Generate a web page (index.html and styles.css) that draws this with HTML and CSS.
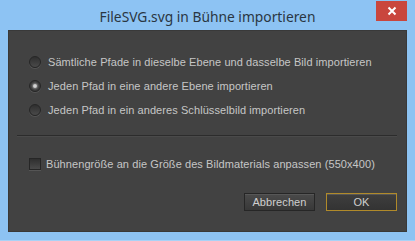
FILE: index.html
```html
<!DOCTYPE html>
<html lang="de">
  <head>
    <meta charset="UTF-8" />
    <meta name="viewport" content="width=device-width, initial-scale=1.0" />
    <title>FileSVG.svg in Bühne importieren</title>
    <link rel="stylesheet" href="styles.css">
  </head>
  <body>
    <div class="window">
      <header class="titlebar">
        <span></span>
        <h1 class="window-title">FileSVG.svg in Bühne importieren</h1>
        <button class="close-button" aria-label="Schließen">
          <svg width="10" height="10" viewBox="0 0 10 10">
            <path d="M1.5 1.5 L8.5 8.5 M8.5 1.5 L1.5 8.5" stroke="#fff" stroke-width="2" />
          </svg>
        </button>
      </header>

      <main class="dialog">
        <div class="options">
          <label class="option">
            <input type="radio" name="mode" class="radio" />
            <span>Sämtliche Pfade in dieselbe Ebene und dasselbe Bild importieren</span>
          </label>
          <label class="option">
            <input type="radio" name="mode" class="radio" checked />
            <span>Jeden Pfad in eine andere Ebene importieren</span>
          </label>
          <label class="option">
            <input type="radio" name="mode" class="radio" />
            <span>Jeden Pfad in ein anderes Schlüsselbild importieren</span>
          </label>
        </div>

        <hr class="divider" />

        <label class="option check-option">
          <input type="checkbox" class="checkbox" />
          <span>Bühnengröße an die Größe des Bildmaterials anpassen (550x400)</span>
        </label>

        <div class="actions">
          <button class="btn">Abbrechen</button>
          <button class="btn btn-default">OK</button>
        </div>
      </main>
    </div>
  </body>
</html>
```

FILE: styles.css
```css
* {
  margin: 0;
  padding: 0;
  box-sizing: border-box;
}

body {
  width: 415px;
  height: 241px;
  overflow: hidden;
  background-color: #8dc3f3;
}

.window {
  height: 241px;
  display: flex;
  flex-direction: column;
  padding: 0 8px 8px 8px;
  background-color: #8dc3f3;
  border-bottom: 1px solid #a9d2f6;
}

.titlebar {
  height: 30px;
  display: grid;
  grid-template-columns: 1fr auto 1fr;
  align-items: start;
}

.window-title {
  font-family: "Noto Sans", sans-serif;
  font-weight: normal;
  font-size: 13.8px;
  line-height: 20px;
  padding-top: 7px;
  color: #2a3642;
  white-space: nowrap;
}

.close-button {
  justify-self: end;
  width: 31px;
  height: 20px;
  margin-top: 1px;
  background-color: #c9463d;
  border: none;
  display: flex;
  align-items: center;
  justify-content: center;
}

.dialog {
  flex: 1;
  background-color: #424242;
  border: 1px solid #393939;
  padding: 19px 9px 0 20px;
  display: flex;
  flex-direction: column;
  font-family: "Liberation Sans", Arial, sans-serif;
  font-size: 11px;
  letter-spacing: 0.08px;
  color: #c6c6c6;
}

.options {
  display: flex;
  flex-direction: column;
}

.option {
  height: 24px;
  display: flex;
  align-items: center;
  gap: 7px;
  white-space: nowrap;
}

.radio,
.checkbox {
  appearance: none;
  width: 12px;
  height: 12px;
  flex: none;
  border: 1px solid #262626;
  background: linear-gradient(#2f2f2f, #4a4a4a);
  box-shadow: 0 1px 0 #555555;
}

.radio {
  border-radius: 50%;
}

.radio:checked {
  background: radial-gradient(circle, #e0e0e0 0, #c4c4c4 1.5px, #6a6a6a 2.5px, #3c3c3c 4px);
}

.check-option {
  gap: 5px;
}

.divider {
  border: none;
  border-top: 1px solid #2c2c2c;
  border-bottom: 1px solid #4a4a4a;
  margin: 13px 0 15px -12px;
}

.actions {
  display: flex;
  justify-content: flex-end;
  gap: 11px;
  margin-top: 17px;
}

.btn {
  width: 71px;
  height: 18px;
  font-family: "Liberation Sans", Arial, sans-serif;
  font-size: 11px;
  letter-spacing: 0.1px;
  color: #cfcfcf;
  background: linear-gradient(#4a4a4a, #383838);
  border: 1px solid #262626;
  box-shadow: inset 0 1px 0 #575757;
}

.btn-default {
  border-color: #b08a2a;
  background: linear-gradient(#3e3e3e, #333333);
}
```
